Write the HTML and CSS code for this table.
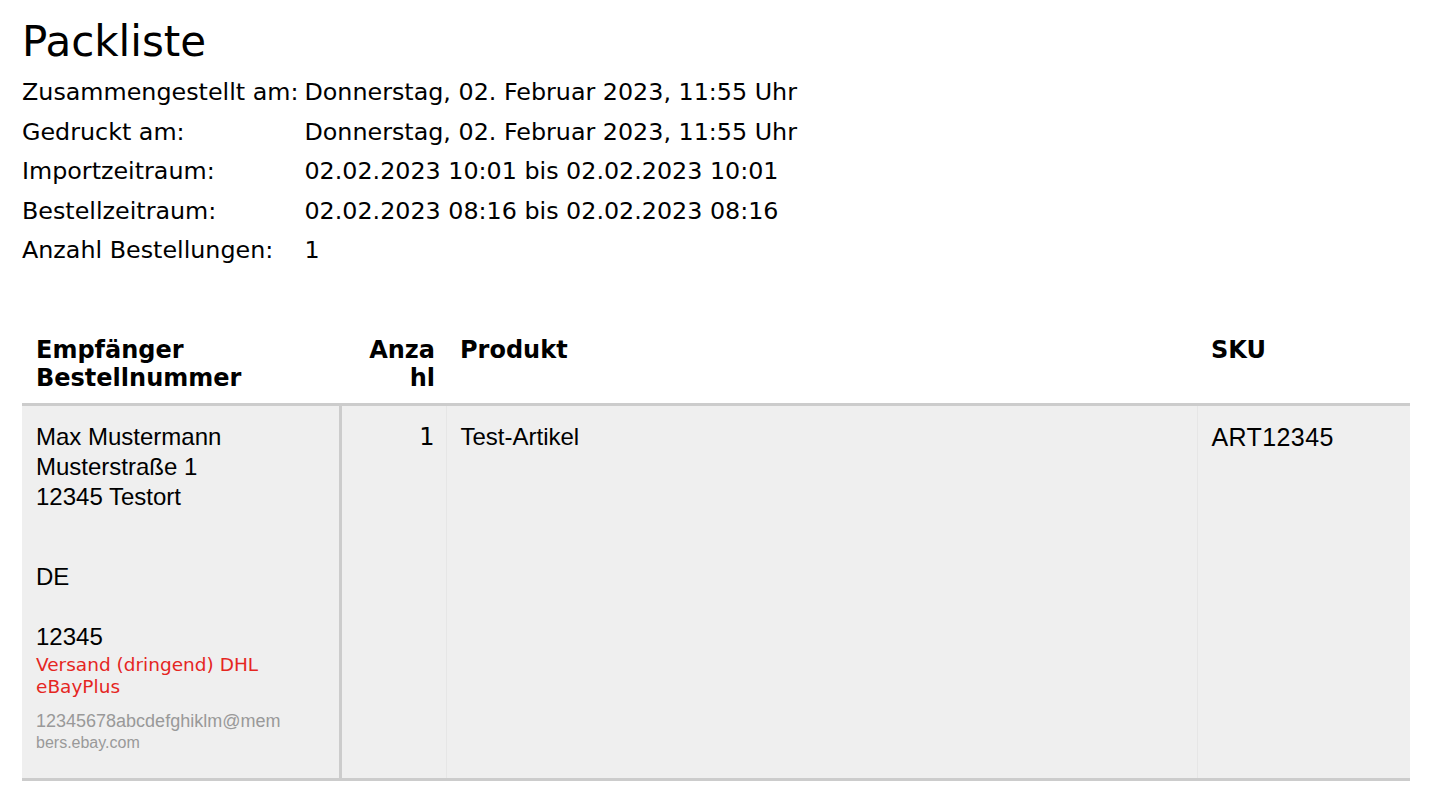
FILE: index.html
```html
<!DOCTYPE html>
<html lang="de">
<head>
    <meta charset="UTF-8">
    <meta name="viewport" content="width=device-width, initial-scale=1.0">
    <title>Packliste</title>
    <link rel="stylesheet" href="styles.css">
</head>
<body>
    <div class="page">
        <h1>Packliste</h1>

        <!-- Kopfdaten -->
        <table class="meta">
            <tr><td class="meta-label">Zusammengestellt am:</td><td>Donnerstag, 02. Februar 2023, 11:55 Uhr</td></tr>
            <tr><td class="meta-label">Gedruckt am:</td><td>Donnerstag, 02. Februar 2023, 11:55 Uhr</td></tr>
            <tr><td class="meta-label">Importzeitraum:</td><td>02.02.2023 10:01 bis 02.02.2023 10:01</td></tr>
            <tr><td class="meta-label">Bestellzeitraum:</td><td>02.02.2023 08:16 bis 02.02.2023 08:16</td></tr>
            <tr><td class="meta-label">Anzahl Bestellungen:</td><td>1</td></tr>
        </table>

        <!-- Positionen -->
        <table class="packlist">
            <thead>
                <tr>
                    <th class="col-recipient">Empfänger<br>Bestellnummer</th>
                    <th class="col-qty">Anzahl</th>
                    <th class="col-product">Produkt</th>
                    <th class="col-sku">SKU</th>
                </tr>
            </thead>
            <tbody>
                <tr>
                    <td class="col-recipient">
                        <div class="address">
                            Max Mustermann<br>
                            Musterstraße 1<br>
                            12345 Testort
                        </div>
                        <div class="country">DE</div>
                        <div class="order-no">12345</div>
                        <div class="shipping">Versand (dringend) DHL eBayPlus</div>
                        <div class="email">
                            <span class="email-first">12345678abcdefghiklm@mem</span>
                            <span class="email-rest">bers.ebay.com</span>
                        </div>
                    </td>
                    <td class="col-qty qty">1</td>
                    <td class="col-product">Test-Artikel</td>
                    <td class="col-sku sku">ART12345</td>
                </tr>
            </tbody>
        </table>
    </div>
</body>
</html>
```

FILE: styles.css
```css
/* Packliste */
body {
    font-family: 'DejaVu Sans', Verdana, sans-serif;
    margin: 0;
    padding: 0;
    background-color: #fff;
    color: #000;
}
.page {
    width: 1388px;
    margin-left: 22px;
}
h1 {
    font-size: 42px;
    font-weight: normal;
    margin: 17px 0 7px 0;
    line-height: 49px;
}
.meta {
    border-collapse: collapse;
    font-size: 23.8px;
}
.meta td {
    padding: 0;
    line-height: 39.5px;
    white-space: nowrap;
}
.meta-label {
    padding-right: 6px !important;
}
.packlist {
    width: 100%;
    margin-top: 53px;
    border-collapse: collapse;
    table-layout: fixed;
}
.packlist th {
    font-size: 24px;
    font-weight: bold;
    text-align: left;
    vertical-align: top;
    line-height: 28px;
    padding: 12px 14px 11px 14px;
    border-bottom: 3px solid #ccc;
}
.packlist td {
    font-family: 'Liberation Sans', Arial, sans-serif;
    font-size: 24px;
    line-height: 30px;
    vertical-align: top;
    background-color: #efefef;
    padding: 16px 14px 24px 14px;
    border-bottom: 3px solid #ccc;
    border-left: 1px solid #e6e6e6;
}
.col-recipient {
    width: 290px;
}
.packlist td.col-recipient {
    border-left: none;
    border-right: 3px solid #ccc;
}
.col-qty {
    width: 81px;
    text-align: right !important;
    padding-right: 11px !important;
    word-break: break-all;
}
.col-product {
    width: 723px;
}
.qty {
    font-family: 'DejaVu Sans', Verdana, sans-serif !important;
}
.packlist td.sku {
    font-size: 25px;
    letter-spacing: 0.4px;
}
.country {
    margin-top: 50px;
}
.order-no {
    margin-top: 30px;
}
.shipping {
    font-family: 'DejaVu Sans', Verdana, sans-serif;
    font-size: 18.5px;
    line-height: 22px;
    color: #e5261f;
    margin-top: 2px;
    width: 240px;
}
.email {
    margin-top: 12px;
    color: #999;
    line-height: 22px;
}
.email span {
    display: block;
}
.email-first {
    font-size: 18px;
}
.email-rest {
    font-size: 16px;
}
```
